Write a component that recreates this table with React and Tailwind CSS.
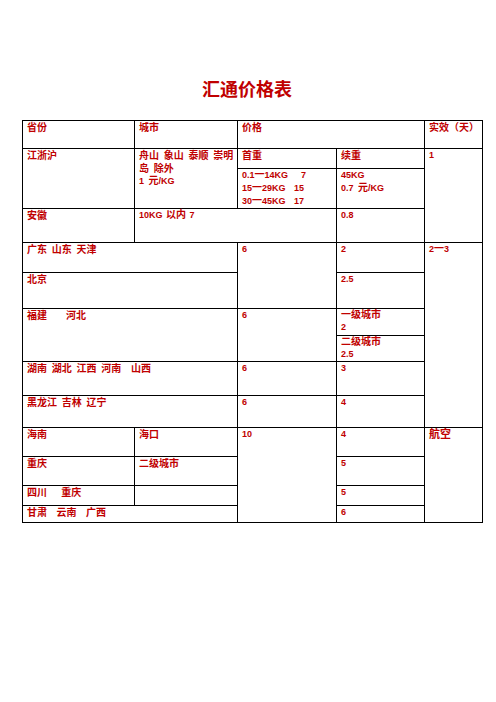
import React from "react";

const cell = "border border-black align-top px-1 pt-0";
const zh = cell + " text-[10px]";

// CJK runs are set a little larger than the Latin digits around them
const Z = ({ children }) => <span className="text-[10px] leading-none">{children}</span>;

function PriceTable() {
  return (
    <table className="table-fixed border-collapse w-[460px] ml-[22px] mt-[18px] text-[9px] leading-[13px] font-bold text-[#c00000] [word-spacing:2px]">
      <colgroup>
        <col className="w-[112px]" />
        <col className="w-[103px]" />
        <col className="w-[99px]" />
        <col className="w-[88px]" />
        <col className="w-[58px]" />
      </colgroup>
      <tbody>
        <tr className="h-[28px]">
          <td className={zh}>省份</td>
          <td className={zh}>城市</td>
          <td className={zh} colSpan={2}>价格</td>
          <td className={zh}>实效（天）</td>
        </tr>
        <tr className="h-[20px]">
          <td className={zh} rowSpan={2}>江浙沪</td>
          <td className={zh} rowSpan={2}>
            <div className="whitespace-nowrap">舟山 象山 泰顺 崇明</div>
            <div>岛 除外</div>
            <div className="text-[9px]">1 <Z>元</Z>/KG</div>
          </td>
          <td className={zh}>首重</td>
          <td className={zh}>续重</td>
          <td className={cell} rowSpan={3}>1</td>
        </tr>
        <tr className="h-[40px]">
          <td className={cell + " whitespace-nowrap"}>
            <div><span className="inline-block w-[52px]">0.1<Z>一</Z>14KG</span><span className="ml-[7px]">7</span></div>
            <div><span className="inline-block w-[52px]">15<Z>一</Z>29KG</span>15</div>
            <div><span className="inline-block w-[52px]">30<Z>一</Z>45KG</span>17</div>
          </td>
          <td className={cell}>
            <div>45KG</div>
            <div>0.7 <Z>元</Z>/KG</div>
          </td>
        </tr>
        <tr className="h-[34px]">
          <td className={zh}>安徽</td>
          <td className={cell + " [word-spacing:1px]"} colSpan={2}>10KG <Z>以内</Z> 7</td>
          <td className={cell}>0.8</td>
        </tr>
        <tr className="h-[30px]">
          <td className={zh} colSpan={2}>广东 山东 天津</td>
          <td className={cell} rowSpan={2}>6</td>
          <td className={cell}>2</td>
          <td className={cell} rowSpan={6}>2<Z>一</Z>3</td>
        </tr>
        <tr className="h-[36px]">
          <td className={zh} colSpan={2}>北京</td>
          <td className={cell}>2.5</td>
        </tr>
        <tr className="h-[27px]">
          <td className={zh + " whitespace-pre"} colSpan={2} rowSpan={2}>{"福建    河北"}</td>
          <td className={cell} rowSpan={2}>6</td>
          <td className={cell + " leading-[12px]"}>
            <div className="text-[10px]">一级城市</div>
            <div>2</div>
          </td>
        </tr>
        <tr className="h-[26px]">
          <td className={cell + " leading-[12px]"}>
            <div className="text-[10px]">二级城市</div>
            <div>2.5</div>
          </td>
        </tr>
        <tr className="h-[34px]">
          <td className={zh + " whitespace-pre"} colSpan={2}>{"湖南 湖北 江西 河南  山西"}</td>
          <td className={cell}>6</td>
          <td className={cell}>3</td>
        </tr>
        <tr className="h-[32px]">
          <td className={zh} colSpan={2}>黑龙江 吉林 辽宁</td>
          <td className={cell}>6</td>
          <td className={cell}>4</td>
        </tr>
        <tr className="h-[29px]">
          <td className={zh}>海南</td>
          <td className={zh}>海口</td>
          <td className={cell} rowSpan={4}>10</td>
          <td className={cell}>4</td>
          <td className={cell + " text-[11px]"} rowSpan={4}>航空</td>
        </tr>
        <tr className="h-[29px]">
          <td className={zh}>重庆</td>
          <td className={zh}>二级城市</td>
          <td className={cell}>5</td>
        </tr>
        <tr className="h-[20px]">
          <td className={zh + " whitespace-pre"}>{"四川   重庆"}</td>
          <td className={cell}></td>
          <td className={cell}>5</td>
        </tr>
        <tr className="h-[17px]">
          <td className={zh + " whitespace-pre"} colSpan={2}>{"甘肃  云南  广西"}</td>
          <td className={cell}>6</td>
        </tr>
      </tbody>
    </table>
  );
}

export default function App() {
  return (
    <div className="w-[496px] h-[702px] bg-white pt-[78px] font-['Liberation_Sans','Noto_Sans_CJK_SC',sans-serif]">
      <h1 className="text-center text-[18px] leading-[24px] font-bold text-[#c00000] pr-[2px]">
        汇通价格表
      </h1>
      <PriceTable />
    </div>
  );
}
